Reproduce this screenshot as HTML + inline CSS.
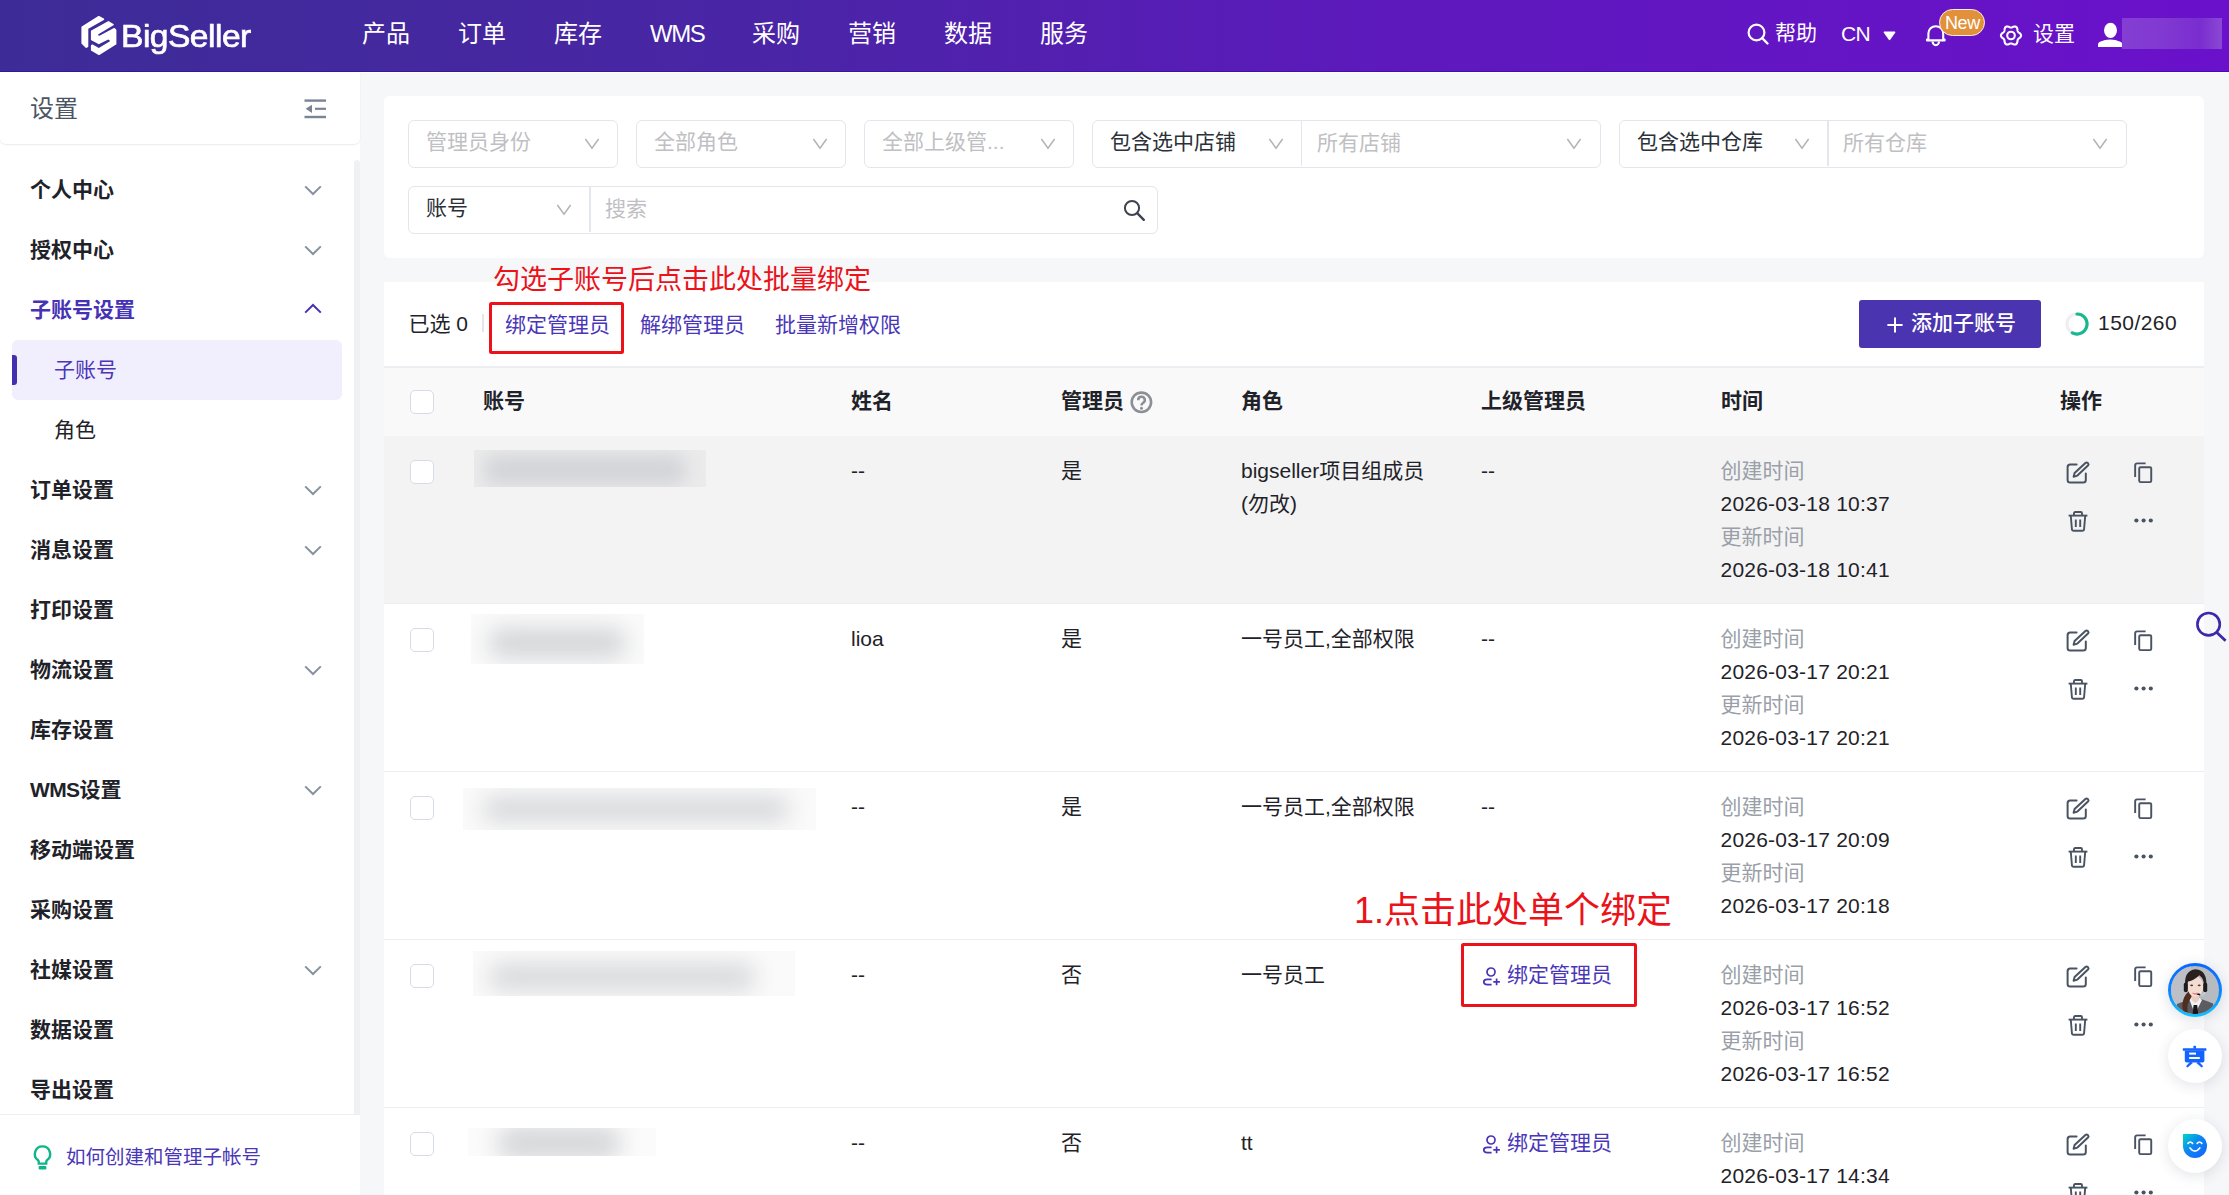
<!DOCTYPE html>
<html lang="zh-CN">
<head>
<meta charset="utf-8">
<title>BigSeller - 子账号</title>
<style>
*{box-sizing:border-box;margin:0;padding:0}
html,body{width:2229px;height:1195px;overflow:hidden}
body{position:relative;background:#f6f7f9;font-family:"Liberation Sans","Noto Sans CJK SC",sans-serif;font-size:21px;color:#1f2329;-webkit-font-smoothing:antialiased}
.abs{position:absolute}
.t{position:absolute;white-space:nowrap;line-height:1}
svg{display:block;overflow:visible}
/* ---------- header ---------- */
#hdr{position:absolute;left:0;top:0;width:2229px;height:72px;background:linear-gradient(90deg,#3d2c97 0%,#4a25a6 35%,#5d19bc 62%,#6a11cb 100%);box-shadow:inset 0 -1px 0 rgba(40,0,150,.45)}
#hdr .nav{position:absolute;top:19px;font-size:24px;line-height:30px;color:#fff;white-space:nowrap}
#hdr .r{position:absolute;color:#fff;font-size:21px;line-height:30px;white-space:nowrap}
/* ---------- sidebar ---------- */
#side{position:absolute;left:0;top:72px;width:360px;height:1123px;background:#fff}
#side .head{position:absolute;left:0;top:0;width:360px;height:72px;background:#fff;border-bottom-left-radius:6px;border-bottom-right-radius:6px;box-shadow:0 1px 1.5px rgba(20,30,60,.09);z-index:2}
#side .mi{position:absolute;left:30px;margin-top:1px;font-size:21px;font-weight:bold;line-height:30px;color:#1f2329;white-space:nowrap}
#side .sub{position:absolute;left:54px;margin-top:1px;font-size:21px;line-height:30px;color:#1f2329;white-space:nowrap}
#side .chev{position:absolute;left:304px}
#side .track{position:absolute;left:354px;top:88px;width:6px;height:954px;background:#f0f1f4;border-radius:3px 3px 0 0}
#side .foot{position:absolute;left:0;top:1042px;width:360px;height:81px;background:#fff;border-top:1px solid #eceef1}

/* ---------- main ---------- */
.card{position:absolute;background:#fff;border-radius:6px}
.sel{position:absolute;height:48px;border:1.5px solid #e3e6ec;border-radius:6px;background:#fff}
.sel .tx{position:absolute;left:17px;top:6px;font-size:21px;line-height:30px;white-space:nowrap;color:#bfc0c3}
.sel .tx.d{color:#2b3138}
.sel svg.cv{position:absolute;top:17px}
.lnk{position:absolute;font-size:21px;line-height:30px;color:#4a37b8;white-space:nowrap}
.th{position:absolute;top:385.5px;font-size:21px;font-weight:bold;line-height:30px;color:#1f2329;white-space:nowrap}
.cb{position:absolute;left:410px;width:24px;height:24px;border:1.5px solid #d5dbe7;border-radius:5px;background:#fff}
.row{position:absolute;left:384px;width:1820px;height:168px;border-bottom:1.5px solid #edeef1}
.c{position:absolute;font-size:21px;line-height:33px;color:#1f2329;white-space:nowrap}
.g{color:#9a9fa8;letter-spacing:0}
.tm{letter-spacing:.22px}
.blur{position:absolute;filter:blur(7px)}
.blbg{position:absolute}
</style>
</head>
<body>
<!-- ================= HEADER ================= -->
<div id="hdr">
  <svg class="abs" style="left:76px;top:10px" width="48" height="50" viewBox="0 0 48 50">
    <g fill="#fff" stroke="#fff" stroke-width="1.6" stroke-linejoin="round">
      <path d="M22.8 6.8 L27.4 9.3 L11.5 18.4 V36.6 L10.2 37.1 L6.2 33.2 V17.2 Z"/>
      <path d="M32.4 11.9 L37 14.6 L21.6 23.8 L21.4 25.9 L23.4 26.6 L38.3 18.8 L39.6 20 V33.9 L23 44.3 L15.7 40 V35.6 L16.8 35.4 L22.8 39 L34.4 32 L34.8 30.3 L32.4 28.6 L22.8 33.4 L15.7 29.5 V21.3 Z"/>
    </g>
  </svg>
  <div class="t" id="logoTxt" style="left:121px;top:18px;font-size:32px;line-height:36px;color:#fff;letter-spacing:-.5px;transform:scaleX(1.05);transform-origin:0 0;-webkit-text-stroke:.7px #fff">BigSeller</div>

  <div class="nav" style="left:362px">产品</div>
  <div class="nav" style="left:458px">订单</div>
  <div class="nav" style="left:554px">库存</div>
  <div class="nav" style="left:650px;letter-spacing:-1.4px">WMS</div>
  <div class="nav" style="left:752px">采购</div>
  <div class="nav" style="left:848px">营销</div>
  <div class="nav" style="left:944px">数据</div>
  <div class="nav" style="left:1040px">服务</div>

  <!-- search -->
  <svg class="abs" style="left:1747px;top:23px" width="22" height="22" viewBox="0 0 22 22"><circle cx="9.5" cy="9.5" r="7.9" fill="none" stroke="#fff" stroke-width="2.2"/><path d="M15.2 15.2 L20.5 20.5" stroke="#fff" stroke-width="2.4" stroke-linecap="round"/></svg>
  <div class="r" style="left:1775px;top:18px">帮助</div>
  <div class="r" style="left:1841px;top:19px;letter-spacing:-.6px">CN</div>
  <svg class="abs" style="left:1883px;top:31px" width="13" height="10" viewBox="0 0 13 10"><path d="M1.2 0.6 H11.8 Q12.8 0.8 12.2 1.8 L7.2 8.8 Q6.5 9.6 5.8 8.8 L0.8 1.8 Q0.2 0.8 1.2 0.6Z" fill="#fff"/></svg>
  <!-- bell -->
  <svg class="abs" style="left:1925px;top:23.6px" width="22" height="23" viewBox="0 0 22 23"><path d="M3.4 15.4 V9.6 A7.4 7.4 0 0 1 18.2 9.6 V15.4 L19.6 15.6 V16.4 H2 V15.6 Z" fill="none" stroke="#fff" stroke-width="2.1" stroke-linejoin="round"/><path d="M7.6 17.6 A3.2 3.6 0 0 0 14 17.6" fill="none" stroke="#fff" stroke-width="2.1"/></svg>
  <div class="abs" style="left:1939px;top:9px;width:46px;height:27px;border-radius:14px;background:#e0913a;border:1.4px solid #fbeede"></div>
  <div class="t" style="left:1945px;top:13px;font-size:18px;line-height:20px;color:#fff;letter-spacing:-.4px">New</div>
  <!-- gear -->
  <svg class="abs" style="left:2000px;top:24.8px" width="22" height="21" viewBox="0 0 22 20.4"><path d="M21.05 10.20 L20.98 10.72 L20.80 11.23 L20.50 11.70 L20.12 12.14 L19.69 12.53 L19.25 12.88 L18.83 13.20 L18.45 13.52 L18.13 13.83 L17.88 14.17 L17.71 14.56 L17.59 14.99 L17.51 15.48 L17.45 16.01 L17.36 16.56 L17.24 17.13 L17.05 17.67 L16.79 18.17 L16.45 18.59 L16.03 18.90 L15.54 19.11 L15.01 19.20 L14.45 19.18 L13.88 19.07 L13.33 18.89 L12.80 18.69 L12.31 18.48 L11.85 18.31 L11.42 18.19 L11.00 18.15 L10.58 18.19 L10.15 18.31 L9.69 18.48 L9.20 18.69 L8.67 18.89 L8.12 19.07 L7.55 19.18 L6.99 19.20 L6.46 19.11 L5.98 18.90 L5.55 18.59 L5.21 18.17 L4.95 17.67 L4.76 17.13 L4.64 16.56 L4.55 16.01 L4.49 15.48 L4.41 14.99 L4.29 14.56 L4.12 14.17 L3.87 13.83 L3.55 13.52 L3.17 13.20 L2.75 12.88 L2.31 12.53 L1.88 12.14 L1.50 11.70 L1.20 11.23 L1.02 10.72 L0.95 10.20 L1.02 9.68 L1.20 9.17 L1.50 8.70 L1.88 8.26 L2.31 7.87 L2.75 7.52 L3.17 7.20 L3.55 6.88 L3.87 6.57 L4.12 6.23 L4.29 5.84 L4.41 5.41 L4.49 4.92 L4.55 4.39 L4.64 3.84 L4.76 3.27 L4.95 2.73 L5.21 2.23 L5.55 1.81 L5.97 1.50 L6.46 1.29 L6.99 1.20 L7.55 1.22 L8.12 1.33 L8.67 1.51 L9.20 1.71 L9.69 1.92 L10.15 2.09 L10.58 2.21 L11.00 2.25 L11.42 2.21 L11.85 2.09 L12.31 1.92 L12.80 1.71 L13.33 1.51 L13.88 1.33 L14.45 1.22 L15.01 1.20 L15.54 1.29 L16.03 1.50 L16.45 1.81 L16.79 2.23 L17.05 2.73 L17.24 3.27 L17.36 3.84 L17.45 4.39 L17.51 4.92 L17.59 5.41 L17.71 5.84 L17.88 6.23 L18.13 6.57 L18.45 6.88 L18.83 7.20 L19.25 7.52 L19.69 7.87 L20.12 8.26 L20.50 8.70 L20.80 9.17 L20.98 9.68Z" fill="none" stroke="#fff" stroke-width="2.1" stroke-linejoin="round"/><circle cx="11" cy="10.2" r="3.8" fill="none" stroke="#fff" stroke-width="2.1"/></svg>
  <div class="r" style="left:2033px;top:19px">设置</div>
  <!-- user -->
  <svg class="abs" style="left:2098px;top:22px" width="25" height="26" viewBox="0 0 25 26"><ellipse cx="12.5" cy="8.3" rx="6.5" ry="7.6" fill="#fff"/><path d="M0 25 V22.4 Q0 20.6 2 19.8 Q7 17.4 12.2 17.4 Q17.4 17.4 22.4 19.8 Q24.2 20.6 24.2 22.4 V25Z" fill="#fff"/></svg>
  <div class="abs" style="left:2122px;top:18px;width:100px;height:31px;background:linear-gradient(90deg,#853ed3 0%,#8038d2 45%,#7a2dcf 78%,#8a48d3 100%)"></div>
</div>

<div class="abs" style="left:0;top:72px;width:2229px;height:1.2px;background:#fff"></div>
<!-- ================= SIDEBAR ================= -->
<div id="side">
  <div class="head">
    <div class="t" style="left:30px;top:22px;font-size:24px;line-height:30px;color:#4b5563">设置</div>
    <svg class="abs" style="left:304px;top:27px" width="23" height="20" viewBox="0 0 23 20"><g fill="#7a8594"><rect x="0.5" y="0.4" width="21.5" height="2.4"/><rect x="11" y="8.7" width="11" height="2.2"/><rect x="0.5" y="16.8" width="21.5" height="2.4"/><path d="M1.6 9.8 L8 5.7 V13.9Z"/></g></svg>
  </div>
  <div class="track"></div>

  <div class="mi" style="top:102px">个人中心</div>
  <div class="mi" style="top:162px">授权中心</div>
  <div class="mi" style="top:222px;color:#4632b4">子账号设置</div>
  <div class="abs" style="left:12px;top:268px;width:330px;height:60px;background:#f1effd;border-radius:6px"></div>
  <div class="abs" style="left:12px;top:283px;width:5px;height:30px;background:#4230b0;border-radius:0 3px 3px 0"></div>
  <div class="sub" style="top:282px;color:#4a37b8">子账号</div>
  <div class="sub" style="top:342px">角色</div>
  <div class="mi" style="top:402px">订单设置</div>
  <div class="mi" style="top:462px">消息设置</div>
  <div class="mi" style="top:522px">打印设置</div>
  <div class="mi" style="top:582px">物流设置</div>
  <div class="mi" style="top:642px">库存设置</div>
  <div class="mi" style="top:702px"><span style="letter-spacing:-.6px">WMS</span>设置</div>
  <div class="mi" style="top:762px">移动端设置</div>
  <div class="mi" style="top:822px">采购设置</div>
  <div class="mi" style="top:882px">社媒设置</div>
  <div class="mi" style="top:942px">数据设置</div>
  <div class="mi" style="top:1002px">导出设置</div>

  <svg class="chev" style="top:113px" width="18" height="11" viewBox="0 0 18 11"><path d="M1.2 1.4 L9 9 L16.8 1.4" fill="none" stroke="#8791a0" stroke-width="2"/></svg>
  <svg class="chev" style="top:173px" width="18" height="11" viewBox="0 0 18 11"><path d="M1.2 1.4 L9 9 L16.8 1.4" fill="none" stroke="#8791a0" stroke-width="2"/></svg>
  <svg class="chev" style="top:231px" width="18" height="11" viewBox="0 0 18 11"><path d="M1.2 9.6 L9 2 L16.8 9.6" fill="none" stroke="#4632b4" stroke-width="2"/></svg>
  <svg class="chev" style="top:413px" width="18" height="11" viewBox="0 0 18 11"><path d="M1.2 1.4 L9 9 L16.8 1.4" fill="none" stroke="#8791a0" stroke-width="2"/></svg>
  <svg class="chev" style="top:473px" width="18" height="11" viewBox="0 0 18 11"><path d="M1.2 1.4 L9 9 L16.8 1.4" fill="none" stroke="#8791a0" stroke-width="2"/></svg>
  <svg class="chev" style="top:593px" width="18" height="11" viewBox="0 0 18 11"><path d="M1.2 1.4 L9 9 L16.8 1.4" fill="none" stroke="#8791a0" stroke-width="2"/></svg>
  <svg class="chev" style="top:713px" width="18" height="11" viewBox="0 0 18 11"><path d="M1.2 1.4 L9 9 L16.8 1.4" fill="none" stroke="#8791a0" stroke-width="2"/></svg>
  <svg class="chev" style="top:893px" width="18" height="11" viewBox="0 0 18 11"><path d="M1.2 1.4 L9 9 L16.8 1.4" fill="none" stroke="#8791a0" stroke-width="2"/></svg>

  <div class="foot">
    <svg class="abs" style="left:33px;top:30px" width="19" height="26" viewBox="0 0 19 26"><path d="M9.5 1.4 A7.6 7.6 0 0 1 14.2 15 Q13.2 15.9 13.2 17.2 V18.6 H5.8 V17.2 Q5.8 15.9 4.8 15 A7.6 7.6 0 0 1 9.5 1.4Z" fill="none" stroke="#10b58a" stroke-width="2.4"/><rect x="5.6" y="21" width="7.8" height="3.6" rx="1" fill="#10b58a"/></svg>
    <div class="t" style="left:66px;top:26.5px;font-size:19.5px;line-height:30px;color:#4a37b8">如何创建和管理子帐号</div>
  </div>
</div>

<!-- ================= MAIN ================= -->
<div id="main">
  <!-- filter card -->
  <div class="card" style="left:384px;top:96px;width:1820px;height:162px"></div>
  <div class="sel" style="left:408px;top:120px;width:210px"><div class="tx">管理员身份</div><svg class="cv" style="left:175px" width="16" height="12" viewBox="0 0 16 12"><path d="M1.4 1 L8 10.2 L14.6 1" fill="none" stroke="#b2b3b6" stroke-width="1.5"/></svg></div>
  <div class="sel" style="left:636px;top:120px;width:210px"><div class="tx">全部角色</div><svg class="cv" style="left:175px" width="16" height="12" viewBox="0 0 16 12"><path d="M1.4 1 L8 10.2 L14.6 1" fill="none" stroke="#b2b3b6" stroke-width="1.5"/></svg></div>
  <div class="sel" style="left:864px;top:120px;width:210px"><div class="tx">全部上级管...</div><svg class="cv" style="left:175px" width="16" height="12" viewBox="0 0 16 12"><path d="M1.4 1 L8 10.2 L14.6 1" fill="none" stroke="#b2b3b6" stroke-width="1.5"/></svg></div>

  <div class="sel" style="left:1092px;top:120px;width:509px"><div class="tx d">包含选中店铺</div><svg class="cv" style="left:175px" width="16" height="12" viewBox="0 0 16 12"><path d="M1.4 1 L8 10.2 L14.6 1" fill="none" stroke="#b2b3b6" stroke-width="1.5"/></svg>
    <div class="abs" style="left:207.5px;top:0;width:1.5px;height:45px;background:#e3e6ec"></div>
    <div class="tx" style="left:224px;top:7px">所有店铺</div><svg class="cv" style="left:473px" width="16" height="12" viewBox="0 0 16 12"><path d="M1.4 1 L8 10.2 L14.6 1" fill="none" stroke="#b2b3b6" stroke-width="1.5"/></svg></div>
  <div class="sel" style="left:1619px;top:120px;width:508px"><div class="tx d">包含选中仓库</div><svg class="cv" style="left:174px" width="16" height="12" viewBox="0 0 16 12"><path d="M1.4 1 L8 10.2 L14.6 1" fill="none" stroke="#b2b3b6" stroke-width="1.5"/></svg>
    <div class="abs" style="left:207px;top:0;width:1.5px;height:45px;background:#e3e6ec"></div>
    <div class="tx" style="left:223px;top:7px">所有仓库</div><svg class="cv" style="left:472px" width="16" height="12" viewBox="0 0 16 12"><path d="M1.4 1 L8 10.2 L14.6 1" fill="none" stroke="#b2b3b6" stroke-width="1.5"/></svg></div>

  <div class="sel" style="left:408px;top:186px;width:750px"><div class="tx d">账号</div><svg class="cv" style="left:147px" width="16" height="12" viewBox="0 0 16 12"><path d="M1.4 1 L8 10.2 L14.6 1" fill="none" stroke="#b2b3b6" stroke-width="1.5"/></svg>
    <div class="abs" style="left:180px;top:0;width:1.5px;height:45px;background:#e3e6ec"></div>
    <div class="tx" style="left:196px;top:7px">搜索</div>
    <svg class="abs" style="left:714px;top:12px" width="23" height="23" viewBox="0 0 23 23"><circle cx="9" cy="9" r="7.1" fill="none" stroke="#3c4450" stroke-width="2"/><path d="M14.2 14.2 L20.8 20.8" stroke="#3c4450" stroke-width="2.4" stroke-linecap="round"/></svg>
  </div>
  <!-- table card -->
  <div class="card" style="left:384px;top:282px;width:1820px;height:920px;border-radius:0"></div>
  <div class="t" style="left:493px;top:265px;font-size:27px;line-height:30px;color:#eb1219">勾选子账号后点击此处批量绑定</div>
  <div class="c" style="left:408.5px;top:308.5px;line-height:30px">已选 0</div>
  <div class="abs" style="left:482px;top:314px;width:1.5px;height:18px;background:#e3e5e9"></div>
  <div class="abs" style="left:489px;top:302px;width:135px;height:51.5px;border:3.7px solid #eb1219;border-radius:2.5px"></div>
  <div class="lnk" style="left:505px;top:310px">绑定管理员</div>
  <div class="lnk" style="left:640px;top:310px">解绑管理员</div>
  <div class="lnk" style="left:775px;top:310px">批量新增权限</div>
  <div class="abs" style="left:1859px;top:300px;width:182px;height:48px;background:#4a34b0;border-radius:3px"></div>
  <svg class="abs" style="left:1886.6px;top:316.6px" width="16" height="16" viewBox="0 0 16 16"><path d="M8 0.4 V15.6 M0.4 8 H15.6" stroke="#fff" stroke-width="2"/></svg>
  <div class="t" style="left:1911px;top:308px;font-size:21px;line-height:30px;color:#fff;font-weight:500">添加子账号</div>
  <svg class="abs" style="left:2064px;top:311px" width="26" height="26" viewBox="0 0 26 26"><circle cx="13" cy="13" r="10" fill="none" stroke="#efeff1" stroke-width="3.2"/><path d="M13 3 A10 10 0 1 1 8.3 21.8" fill="none" stroke="#17b890" stroke-width="3.2" stroke-linecap="round"/></svg>
  <div class="c" style="left:2098px;top:308px;line-height:30px;letter-spacing:.45px">150/260</div>

  <!-- table head -->
  <div class="abs" style="left:384px;top:366px;width:1820px;height:1.5px;background:#edeef1"></div>
  <div class="abs" style="left:384px;top:367.5px;width:1820px;height:68px;background:#f9f9fa"></div>
  <div class="cb" style="top:390px"></div>
  <div class="th" style="left:483px">账号</div>
  <div class="th" style="left:851px">姓名</div>
  <div class="th" style="left:1061px">管理员</div>
  <svg class="abs" style="left:1130px;top:390.6px" width="23" height="23" viewBox="0 0 23 23"><circle cx="11.4" cy="11.3" r="9.7" fill="none" stroke="#8d8f94" stroke-width="2.6"/><path d="M8.2 9.2 A3.3 3.3 0 1 1 12.9 12 Q11.5 12.9 11.5 14.4" fill="none" stroke="#8d8f94" stroke-width="2.5"/><circle cx="11.5" cy="17.2" r="1.5" fill="#8d8f94"/></svg>
  <div class="th" style="left:1241px">角色</div>
  <div class="th" style="left:1481px">上级管理员</div>
  <div class="th" style="left:1721px">时间</div>
  <div class="th" style="left:2060px">操作</div>

  <!-- row 1 -->
  <div class="row" style="top:435.5px;background:#f3f3f4"></div>
  <div class="cb" style="top:459.5px"></div>
  <div class="abs" style="left:474px;top:450px;width:232px;height:37px;overflow:hidden;background:rgba(0,0,0,.03)"><div class="abs" style="left:10px;top:5px;width:202px;height:30px;background:#d3d4d8;border-radius:12px;filter:blur(9px)"></div></div>
  <div class="c" style="left:851px;top:453.5px">--</div>
  <div class="c" style="left:1061px;top:453.5px">是</div>
  <div class="c" style="left:1241px;top:453.5px;white-space:normal;width:220px">bigseller项目组成员<br>(勿改)</div>
  <div class="c" style="left:1481px;top:453.5px">--</div>
  <div class="c tm" style="left:1720.5px;top:453.5px"><span class="g">创建时间</span><br>2026-03-18 10:37<br><span class="g">更新时间</span><br>2026-03-18 10:41</div>
  <svg class="abs" style="left:2066px;top:461.0px" width="24" height="23" viewBox="0 0 24 23"><g fill="none" stroke="#4a5362" stroke-width="2" stroke-linejoin="round" stroke-linecap="round"><path d="M10.6 3.6 H4.2 Q1.6 3.6 1.6 6.2 V19 Q1.6 21.6 4.2 21.6 H17.2 Q19.8 21.6 19.8 19 V12.6"/><path d="M19.4 1.9 Q20.6 0.9 21.7 2 L22.1 2.4 Q23.1 3.5 22 4.6 L11.4 14.6 L7.6 15.8 L8.6 12 Z"/></g></svg>
  <svg class="abs" style="left:2134px;top:461.5px" width="18.4" height="21.3" viewBox="0 0 19 22"><g fill="none" stroke="#4a5362" stroke-width="2" stroke-linejoin="round"><rect x="5.4" y="5.4" width="12.4" height="15.4" rx="1.4"/><path d="M12 1.4 H3.4 Q1.2 1.4 1.2 3.6 V15.6" stroke-linecap="butt"/></g></svg>
  <svg class="abs" style="left:2068px;top:510.5px" width="20" height="21" viewBox="0 0 20 21"><g fill="none" stroke="#4a5362" stroke-width="1.9" stroke-linejoin="round"><path d="M0.6 4.6 H19.4"/><path d="M6 4.4 V2.2 Q6 1 7.2 1 H12.8 Q14 1 14 2.2 V4.4"/><path d="M2.8 4.8 L3.9 18 Q4 19.8 5.8 19.8 H14.2 Q16 19.8 16.1 18 L17.2 4.8"/><path d="M7.8 8.6 V16 M12.2 8.6 V16"/></g></svg>
  <svg class="abs" style="left:2134px;top:518.0px" width="20" height="5" viewBox="0 0 20 5"><g fill="#4a5362"><circle cx="2.4" cy="2.5" r="2.1"/><circle cx="9.6" cy="2.5" r="2.1"/><circle cx="16.8" cy="2.5" r="2.1"/></g></svg>
  <!-- row 2 -->
  <div class="row" style="top:603.5px;background:#fff"></div>
  <div class="cb" style="top:627.5px"></div>
  <div class="abs" style="left:471px;top:614px;width:173px;height:50px;overflow:hidden;background:rgba(0,0,0,.018)"><div class="abs" style="left:18px;top:14px;width:136px;height:30px;background:#d4d6d9;border-radius:12px;filter:blur(11px)"></div></div>
  <div class="c" style="left:851px;top:621.5px">lioa</div>
  <div class="c" style="left:1061px;top:621.5px">是</div>
  <div class="c" style="left:1241px;top:621.5px;white-space:normal;width:220px">一号员工,全部权限</div>
  <div class="c" style="left:1481px;top:621.5px">--</div>
  <div class="c tm" style="left:1720.5px;top:621.5px"><span class="g">创建时间</span><br>2026-03-17 20:21<br><span class="g">更新时间</span><br>2026-03-17 20:21</div>
  <svg class="abs" style="left:2066px;top:629.0px" width="24" height="23" viewBox="0 0 24 23"><g fill="none" stroke="#4a5362" stroke-width="2" stroke-linejoin="round" stroke-linecap="round"><path d="M10.6 3.6 H4.2 Q1.6 3.6 1.6 6.2 V19 Q1.6 21.6 4.2 21.6 H17.2 Q19.8 21.6 19.8 19 V12.6"/><path d="M19.4 1.9 Q20.6 0.9 21.7 2 L22.1 2.4 Q23.1 3.5 22 4.6 L11.4 14.6 L7.6 15.8 L8.6 12 Z"/></g></svg>
  <svg class="abs" style="left:2134px;top:629.5px" width="18.4" height="21.3" viewBox="0 0 19 22"><g fill="none" stroke="#4a5362" stroke-width="2" stroke-linejoin="round"><rect x="5.4" y="5.4" width="12.4" height="15.4" rx="1.4"/><path d="M12 1.4 H3.4 Q1.2 1.4 1.2 3.6 V15.6" stroke-linecap="butt"/></g></svg>
  <svg class="abs" style="left:2068px;top:678.5px" width="20" height="21" viewBox="0 0 20 21"><g fill="none" stroke="#4a5362" stroke-width="1.9" stroke-linejoin="round"><path d="M0.6 4.6 H19.4"/><path d="M6 4.4 V2.2 Q6 1 7.2 1 H12.8 Q14 1 14 2.2 V4.4"/><path d="M2.8 4.8 L3.9 18 Q4 19.8 5.8 19.8 H14.2 Q16 19.8 16.1 18 L17.2 4.8"/><path d="M7.8 8.6 V16 M12.2 8.6 V16"/></g></svg>
  <svg class="abs" style="left:2134px;top:686.0px" width="20" height="5" viewBox="0 0 20 5"><g fill="#4a5362"><circle cx="2.4" cy="2.5" r="2.1"/><circle cx="9.6" cy="2.5" r="2.1"/><circle cx="16.8" cy="2.5" r="2.1"/></g></svg>
  <!-- row 3 -->
  <div class="row" style="top:771.5px;background:#fff"></div>
  <div class="cb" style="top:795.5px"></div>
  <div class="abs" style="left:463px;top:788px;width:353px;height:42px;overflow:hidden;background:rgba(0,0,0,.02)"><div class="abs" style="left:20px;top:8px;width:306px;height:26px;background:#d8d9dc;border-radius:12px;filter:blur(11px)"></div></div>
  <div class="c" style="left:851px;top:789.5px">--</div>
  <div class="c" style="left:1061px;top:789.5px">是</div>
  <div class="c" style="left:1241px;top:789.5px;white-space:normal;width:220px">一号员工,全部权限</div>
  <div class="c" style="left:1481px;top:789.5px">--</div>
  <div class="c tm" style="left:1720.5px;top:789.5px"><span class="g">创建时间</span><br>2026-03-17 20:09<br><span class="g">更新时间</span><br>2026-03-17 20:18</div>
  <svg class="abs" style="left:2066px;top:797.0px" width="24" height="23" viewBox="0 0 24 23"><g fill="none" stroke="#4a5362" stroke-width="2" stroke-linejoin="round" stroke-linecap="round"><path d="M10.6 3.6 H4.2 Q1.6 3.6 1.6 6.2 V19 Q1.6 21.6 4.2 21.6 H17.2 Q19.8 21.6 19.8 19 V12.6"/><path d="M19.4 1.9 Q20.6 0.9 21.7 2 L22.1 2.4 Q23.1 3.5 22 4.6 L11.4 14.6 L7.6 15.8 L8.6 12 Z"/></g></svg>
  <svg class="abs" style="left:2134px;top:797.5px" width="18.4" height="21.3" viewBox="0 0 19 22"><g fill="none" stroke="#4a5362" stroke-width="2" stroke-linejoin="round"><rect x="5.4" y="5.4" width="12.4" height="15.4" rx="1.4"/><path d="M12 1.4 H3.4 Q1.2 1.4 1.2 3.6 V15.6" stroke-linecap="butt"/></g></svg>
  <svg class="abs" style="left:2068px;top:846.5px" width="20" height="21" viewBox="0 0 20 21"><g fill="none" stroke="#4a5362" stroke-width="1.9" stroke-linejoin="round"><path d="M0.6 4.6 H19.4"/><path d="M6 4.4 V2.2 Q6 1 7.2 1 H12.8 Q14 1 14 2.2 V4.4"/><path d="M2.8 4.8 L3.9 18 Q4 19.8 5.8 19.8 H14.2 Q16 19.8 16.1 18 L17.2 4.8"/><path d="M7.8 8.6 V16 M12.2 8.6 V16"/></g></svg>
  <svg class="abs" style="left:2134px;top:854.0px" width="20" height="5" viewBox="0 0 20 5"><g fill="#4a5362"><circle cx="2.4" cy="2.5" r="2.1"/><circle cx="9.6" cy="2.5" r="2.1"/><circle cx="16.8" cy="2.5" r="2.1"/></g></svg>
  <!-- row 4 -->
  <div class="row" style="top:939.5px;background:#fff"></div>
  <div class="cb" style="top:963.5px"></div>
  <div class="abs" style="left:473px;top:951px;width:322px;height:45px;overflow:hidden;background:rgba(0,0,0,.02)"><div class="abs" style="left:16px;top:12px;width:266px;height:28px;background:#d9dadd;border-radius:12px;filter:blur(11px)"></div></div>
  <div class="c" style="left:851px;top:957.5px">--</div>
  <div class="c" style="left:1061px;top:957.5px">否</div>
  <div class="c" style="left:1241px;top:957.5px;white-space:normal;width:220px">一号员工</div>
  <svg class="abs" style="left:1482px;top:966.5px" width="19" height="19" viewBox="0 0 19 19"><g fill="none" stroke="#4a32b8" stroke-width="1.7"><circle cx="9" cy="5" r="4"/><path d="M9.6 12.4 H5.2 Q1.8 12.4 1.8 15 Q1.8 17.6 5.2 17.6 H9.6"/><path d="M14.6 11.6 V18.2 M11.3 14.9 H17.9"/></g></svg>
  <div class="lnk" style="left:1507px;top:959.5px">绑定管理员</div>
  <div class="c tm" style="left:1720.5px;top:957.5px"><span class="g">创建时间</span><br>2026-03-17 16:52<br><span class="g">更新时间</span><br>2026-03-17 16:52</div>
  <svg class="abs" style="left:2066px;top:965.0px" width="24" height="23" viewBox="0 0 24 23"><g fill="none" stroke="#4a5362" stroke-width="2" stroke-linejoin="round" stroke-linecap="round"><path d="M10.6 3.6 H4.2 Q1.6 3.6 1.6 6.2 V19 Q1.6 21.6 4.2 21.6 H17.2 Q19.8 21.6 19.8 19 V12.6"/><path d="M19.4 1.9 Q20.6 0.9 21.7 2 L22.1 2.4 Q23.1 3.5 22 4.6 L11.4 14.6 L7.6 15.8 L8.6 12 Z"/></g></svg>
  <svg class="abs" style="left:2134px;top:965.5px" width="18.4" height="21.3" viewBox="0 0 19 22"><g fill="none" stroke="#4a5362" stroke-width="2" stroke-linejoin="round"><rect x="5.4" y="5.4" width="12.4" height="15.4" rx="1.4"/><path d="M12 1.4 H3.4 Q1.2 1.4 1.2 3.6 V15.6" stroke-linecap="butt"/></g></svg>
  <svg class="abs" style="left:2068px;top:1014.5px" width="20" height="21" viewBox="0 0 20 21"><g fill="none" stroke="#4a5362" stroke-width="1.9" stroke-linejoin="round"><path d="M0.6 4.6 H19.4"/><path d="M6 4.4 V2.2 Q6 1 7.2 1 H12.8 Q14 1 14 2.2 V4.4"/><path d="M2.8 4.8 L3.9 18 Q4 19.8 5.8 19.8 H14.2 Q16 19.8 16.1 18 L17.2 4.8"/><path d="M7.8 8.6 V16 M12.2 8.6 V16"/></g></svg>
  <svg class="abs" style="left:2134px;top:1022.0px" width="20" height="5" viewBox="0 0 20 5"><g fill="#4a5362"><circle cx="2.4" cy="2.5" r="2.1"/><circle cx="9.6" cy="2.5" r="2.1"/><circle cx="16.8" cy="2.5" r="2.1"/></g></svg>
  <!-- row 5 -->
  <div class="row" style="top:1107.5px;background:#fff"></div>
  <div class="cb" style="top:1131.5px"></div>
  <div class="abs" style="left:468px;top:1128px;width:188px;height:28px;overflow:hidden;background:rgba(0,0,0,.015)"><div class="abs" style="left:30px;top:-2px;width:122px;height:34px;background:#d6d7da;border-radius:12px;filter:blur(11px)"></div></div>
  <div class="c" style="left:851px;top:1125.5px">--</div>
  <div class="c" style="left:1061px;top:1125.5px">否</div>
  <div class="c" style="left:1241px;top:1125.5px;white-space:normal;width:220px">tt</div>
  <svg class="abs" style="left:1482px;top:1134.5px" width="19" height="19" viewBox="0 0 19 19"><g fill="none" stroke="#4a32b8" stroke-width="1.7"><circle cx="9" cy="5" r="4"/><path d="M9.6 12.4 H5.2 Q1.8 12.4 1.8 15 Q1.8 17.6 5.2 17.6 H9.6"/><path d="M14.6 11.6 V18.2 M11.3 14.9 H17.9"/></g></svg>
  <div class="lnk" style="left:1507px;top:1127.5px">绑定管理员</div>
  <div class="c tm" style="left:1720.5px;top:1125.5px"><span class="g">创建时间</span><br>2026-03-17 14:34<br><span class="g">更新时间</span><br></div>
  <svg class="abs" style="left:2066px;top:1133.0px" width="24" height="23" viewBox="0 0 24 23"><g fill="none" stroke="#4a5362" stroke-width="2" stroke-linejoin="round" stroke-linecap="round"><path d="M10.6 3.6 H4.2 Q1.6 3.6 1.6 6.2 V19 Q1.6 21.6 4.2 21.6 H17.2 Q19.8 21.6 19.8 19 V12.6"/><path d="M19.4 1.9 Q20.6 0.9 21.7 2 L22.1 2.4 Q23.1 3.5 22 4.6 L11.4 14.6 L7.6 15.8 L8.6 12 Z"/></g></svg>
  <svg class="abs" style="left:2134px;top:1133.5px" width="18.4" height="21.3" viewBox="0 0 19 22"><g fill="none" stroke="#4a5362" stroke-width="2" stroke-linejoin="round"><rect x="5.4" y="5.4" width="12.4" height="15.4" rx="1.4"/><path d="M12 1.4 H3.4 Q1.2 1.4 1.2 3.6 V15.6" stroke-linecap="butt"/></g></svg>
  <svg class="abs" style="left:2068px;top:1182.5px" width="20" height="21" viewBox="0 0 20 21"><g fill="none" stroke="#4a5362" stroke-width="1.9" stroke-linejoin="round"><path d="M0.6 4.6 H19.4"/><path d="M6 4.4 V2.2 Q6 1 7.2 1 H12.8 Q14 1 14 2.2 V4.4"/><path d="M2.8 4.8 L3.9 18 Q4 19.8 5.8 19.8 H14.2 Q16 19.8 16.1 18 L17.2 4.8"/><path d="M7.8 8.6 V16 M12.2 8.6 V16"/></g></svg>
  <svg class="abs" style="left:2134px;top:1190.0px" width="20" height="5" viewBox="0 0 20 5"><g fill="#4a5362"><circle cx="2.4" cy="2.5" r="2.1"/><circle cx="9.6" cy="2.5" r="2.1"/><circle cx="16.8" cy="2.5" r="2.1"/></g></svg>
  <!-- annotation 2 -->
  <div class="t" style="left:1354px;top:890.5px;font-size:36px;line-height:40px;color:#eb1219">1.点击此处单个绑定</div>
  <div class="abs" style="left:1461px;top:943px;width:176px;height:64px;border:3.7px solid #eb1219;border-radius:2.5px"></div>
  <!-- floating widgets -->
  <svg class="abs" style="left:2194px;top:610px" width="34" height="34" viewBox="0 0 34 34"><circle cx="14.6" cy="14.2" r="11.2" fill="none" stroke="#3e27a8" stroke-width="2.6"/><path d="M22.8 22.4 L31.6 30.8" stroke="#3e27a8" stroke-width="2.8"/></svg>

  <div class="abs" style="left:2168px;top:963px;width:54px;height:54px;border-radius:50%;background:linear-gradient(180deg,#0a66ff 0%,#0b86ff 55%,#14c4ff 100%);box-shadow:0 3px 14px rgba(40,50,80,.16)"></div>
  <svg class="abs" style="left:2171px;top:966px" width="48" height="48" viewBox="0 0 48 48">
    <defs><clipPath id="avc"><circle cx="24" cy="24" r="24"/></clipPath></defs>
    <g clip-path="url(#avc)">
      <rect width="48" height="48" fill="#b6bac1"/>
      <path d="M0 0 H20 V48 H0Z" fill="#bcc0c6"/>
      <!-- suit -->
      <path d="M4 48 L6 38 Q14 35 19 33.5 L24 44 L30 33 Q36 35 42 37.5 L44 48Z" fill="#5b5b60"/>
      <path d="M18.5 34 L24 48 L31 34 L27 31 H21Z" fill="#f2f2f4"/>
      <path d="M22.6 39 H26.2 L27.2 48 H21.6Z" fill="#17171a"/>
      <!-- ponytail -->
      <path d="M17.6 25.6 Q12.4 30 11.4 38 Q11 42.6 12.6 45.4 L16.8 46.4 Q15.6 40 17.8 35.4 Q19.4 32 21.4 30Z" fill="#4f2d20"/>
      <!-- neck & face -->
      <path d="M20.5 27 H28 V34 L24.4 37 L20.5 34Z" fill="#eccdbd"/>
      <ellipse cx="24.4" cy="20.6" rx="8" ry="10.4" fill="#f3dbd0"/>
      <!-- hair -->
      <path d="M14.2 22 Q12.2 4.6 24.6 3.2 Q37 4 35.2 22 L33 22.6 Q33.6 13 28.4 9.2 Q22 15 17 15.6 Q16 19 16.4 22.6Z" fill="#2a211f"/>
      <!-- headset -->
      <rect x="12.8" y="16.6" width="4" height="9.6" rx="2" fill="#1c1c20"/>
      <rect x="32.2" y="16.6" width="4" height="9.6" rx="2" fill="#1c1c20"/>
      <path d="M34 26 Q33 30 27.4 28.6" fill="none" stroke="#cfd3da" stroke-width="1.1"/>
      <rect x="25.6" y="27.4" width="3.8" height="1.7" rx=".8" fill="#16161a" transform="rotate(14 27.5 28.2)"/>
      <!-- features -->
      <ellipse cx="20.6" cy="19.4" rx="1.5" ry=".8" fill="#4b3a36"/>
      <ellipse cx="28.2" cy="19.4" rx="1.5" ry=".8" fill="#4b3a36"/>
      <path d="M21.6 27.2 Q24.2 29.4 27 27.2 Q24.2 28 21.6 27.2Z" fill="#e8778a" stroke="#e8778a" stroke-width=".8"/>
    </g>
  </svg>

  <div class="abs" style="left:2168px;top:1029px;width:54px;height:54px;border-radius:50%;background:#fff;box-shadow:0 3px 14px rgba(40,50,80,.13)"></div>
  <svg class="abs" style="left:2182px;top:1045px" width="26" height="24" viewBox="0 0 26 24"><g fill="#1463ff"><rect x="11.4" y="0.8" width="2.6" height="3" rx=".6"/><rect x="0.8" y="3.2" width="23.6" height="2.6" rx=".6"/><path d="M2.8 5.4 H22.4 V15.8 Q22.4 17.6 20.6 17.6 H4.6 Q2.8 17.6 2.8 15.8Z"/><path d="M8.4 16.6 L10.8 18 L5.6 22.6 L4 21.2Z"/><path d="M16.8 16.6 L14.4 18 L19.6 22.6 L21.2 21.2Z"/></g><rect x="7.2" y="7.6" width="6.8" height="2" fill="#fff"/><rect x="7.2" y="12" width="10.6" height="2" fill="#fff"/></svg>

  <div class="abs" style="left:2168px;top:1119px;width:54px;height:54px;border-radius:50%;background:#fff;box-shadow:0 3px 14px rgba(40,50,80,.13)"></div>
  <svg class="abs" style="left:2183px;top:1134px" width="24" height="24" viewBox="0 0 24 24"><defs><linearGradient id="smg" x1="0" y1="0" x2="1" y2="1"><stop offset="0" stop-color="#00d6c6"/><stop offset=".45" stop-color="#0d86f2"/><stop offset="1" stop-color="#1560ff"/></linearGradient></defs><path d="M0 0 H12 A12 12 0 1 1 0 12Z" fill="url(#smg)"/><g fill="none" stroke="#fff" stroke-width="1.7" stroke-linecap="round"><path d="M5 9.4 Q7.2 6.6 9.6 9.4"/><path d="M14.2 9.4 Q16.4 6.6 18.8 9.4"/><path d="M7 14 Q11.8 20.4 16.8 14"/></g></svg>
</div>
</body>
</html>
